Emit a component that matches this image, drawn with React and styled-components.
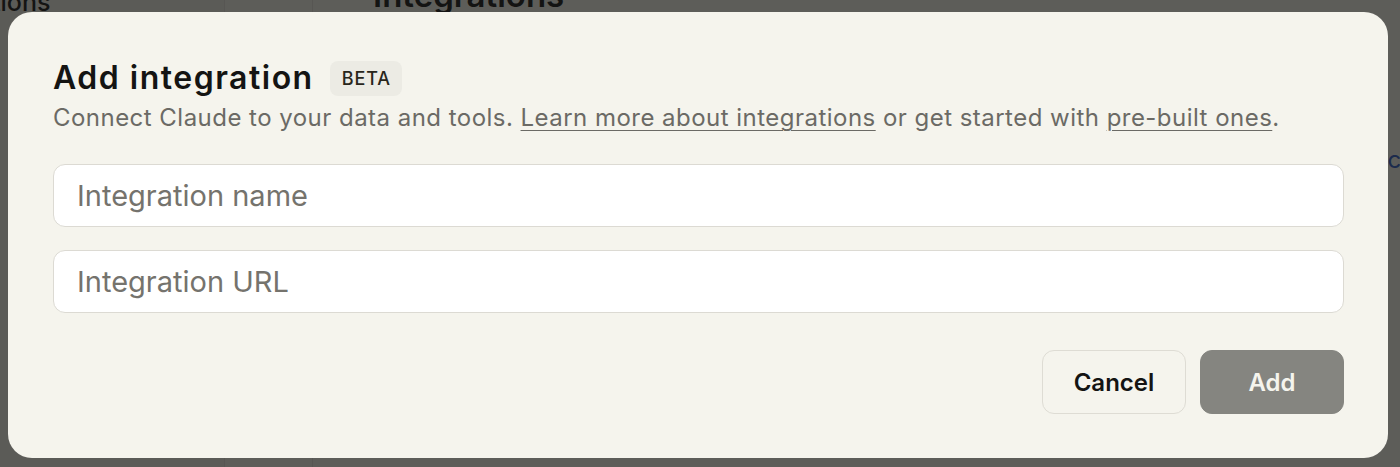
import React from "react";
import styled, { createGlobalStyle } from "styled-components";

const GlobalStyle = createGlobalStyle`
  html, body {
    margin: 0;
    padding: 0;
    width: 1400px;
    height: 467px;
    overflow: hidden;
    background: #f5f4ed;
    font-family: "Inter", "Noto Sans", sans-serif;
  }
  * { box-sizing: border-box; }
`;

// page behind the dialog
const Page = styled.div`
  display: flex;
  width: 1400px;
  height: 467px;
`;
const Sidebar = styled.div`
  width: 225px;
  border-right: 1px solid #e2e0d8;
  background: #f0eee6;
  overflow: hidden;
`;
const SideItem = styled.div`
  margin: -12px 0 0 -92px;
  font-size: 25px;
  font-weight: 500;
  line-height: 28px;
  color: #141413;
  white-space: nowrap;
`;
const SubNav = styled.div`
  width: 88px;
  border-right: 1px solid #e2e0d8;
`;
const Main = styled.div`
  flex: 1;
  padding-left: 60px;
  display: flex;
  flex-direction: column;
`;
const PageTitle = styled.h1`
  margin: -25px 0 0;
  font-size: 33px;
  line-height: 40px;
  font-weight: 600;
  color: #141413;
`;
const SideLink = styled.a`
  align-self: flex-end;
  margin: 130px -14px 0 0;
  font-size: 24px;
  color: #2c5cc5;
  text-decoration: none;
`;

// dialog
const Overlay = styled.div`
  position: fixed;
  inset: 0;
  background: rgba(20, 20, 19, 0.68);
  display: flex;
  padding: 12px 12px 9px 8px;
`;
const Dialog = styled.div`
  flex: 1;
  background: #f5f4ed;
  border-radius: 24px;
  padding: 48px 44px 44px 45px;
  display: flex;
  flex-direction: column;
`;
const Heading = styled.div`
  display: flex;
  align-items: center;
  gap: 16px;
  height: 36px;
`;
const Title = styled.h2`
  margin: 0;
  font-size: 32px;
  line-height: 36px;
  font-weight: 600;
  letter-spacing: 1.5px;
  color: #141413;
`;
const Badge = styled.span`
  display: inline-flex;
  align-items: center;
  height: 35px;
  padding: 0 11px 0 12px;
  border-radius: 8px;
  background: #ecebe4;
  font-size: 18px;
  font-weight: 500;
  letter-spacing: 0.9px;
  color: #29261b;
`;
const Lead = styled.p`
  margin: 7px 0 0;
  font-size: 24px;
  line-height: 30px;
  color: #6b6a65;
  letter-spacing: 0.47px;
  white-space: nowrap;
`;
const TextLink = styled.a`
  color: inherit;
  text-decoration: underline;
  text-underline-offset: 4px;
  text-decoration-thickness: 1px;
`;
const Fields = styled.div`
  display: flex;
  flex-direction: column;
  gap: 23px;
  margin-top: 31px;
`;
const Field = styled.input`
  height: 63px;
  border: 1px solid #dcdad3;
  border-radius: 12px;
  background: #ffffff;
  padding: 0 23px;
  font-family: inherit;
  font-size: 29px;
  color: #141413;
  outline: none;
  &::placeholder {
    color: #75736d;
  }
`;
const Actions = styled.div`
  display: flex;
  justify-content: flex-end;
  gap: 14px;
  margin-top: auto;
`;
const Button = styled.button`
  width: 144px;
  height: 64px;
  border-radius: 12px;
  font-family: inherit;
  font-size: 24px;
  font-weight: 600;
  cursor: pointer;
  border: 1px solid ${(p) => (p.$primary ? "#858580" : "#dedcd4")};
  background: ${(p) => (p.$primary ? "#858580" : "transparent")};
  color: ${(p) => (p.$primary ? "#f5f4ed" : "#141413")};
`;

export default function App() {
  return (
    <>
      <GlobalStyle />
      <Page>
        <Sidebar>
          <SideItem>Integrations</SideItem>
        </Sidebar>
        <SubNav />
        <Main>
          <PageTitle>Integrations</PageTitle>
          <SideLink href="#">Docs</SideLink>
        </Main>
      </Page>
      <Overlay>
        <Dialog>
          <Heading>
            <Title>Add integration</Title>
            <Badge>BETA</Badge>
          </Heading>
          <Lead>
            Connect Claude to your data and tools.{" "}
            <TextLink href="#">Learn more about integrations</TextLink> or get
            started with <TextLink href="#">pre-built ones</TextLink>.
          </Lead>
          <Fields>
            <Field placeholder="Integration name" />
            <Field placeholder="Integration URL" />
          </Fields>
          <Actions>
            <Button>Cancel</Button>
            <Button $primary disabled>
              Add
            </Button>
          </Actions>
        </Dialog>
      </Overlay>
    </>
  );
}
